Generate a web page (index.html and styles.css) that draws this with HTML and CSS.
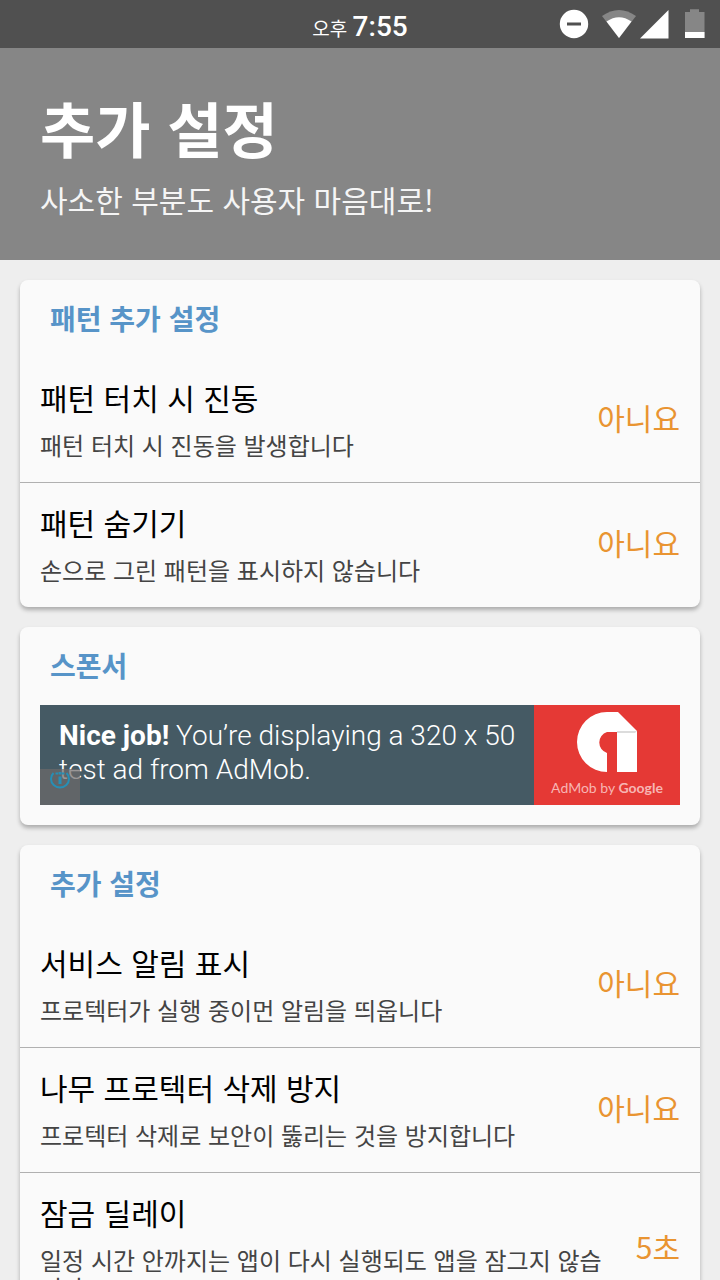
FILE: index.html
```html
<!DOCTYPE html>
<html lang="ko">
<head>
<meta charset="utf-8">
<meta name="viewport" content="width=device-width, initial-scale=1">
<title>추가 설정</title>
<link rel="stylesheet" href="styles.css">
</head>
<body>
<div class="screen">
  <div class="status-bar">
    <div class="clock"><span class="meridiem">오후</span> <span class="time">7:55</span></div>
    <svg class="status-icons" width="148" height="32" viewBox="0 0 148 32" aria-hidden="true">
      <circle cx="16" cy="16" r="14.2" fill="#fff"/>
      <rect x="9" y="14.5" width="14" height="3" fill="#505050"/>
      <path d="M44 8Q61 -4 78 8L61 30Z" fill="#868686"/>
      <path d="M48.5 13.5Q61 5 73.500 13.500L61 30Z" fill="#fff"/>
      <path d="M110.500 2V30.500H82Z" fill="#fff"/>
      <path d="M132 1.200h9V4h5.500v26H127V4h5z" fill="#868686"/>
      <rect x="127" y="24" width="19.500" height="6" fill="#fff"/>
    </svg>
  </div>
  <header class="page-header">
    <h1 class="page-title">추가 설정</h1>
    <p class="page-subtitle">사소한 부분도 사용자 마음대로!</p>
  </header>
  <main class="content">
    <section class="card">
      <h2 class="card-title">패턴 추가 설정</h2>
      <button class="row" type="button">
        <span class="row-text"><span class="row-title">패턴 터치 시 진동</span><span class="row-note">패턴 터치 시 진동을 발생합니다</span></span>
        <span class="row-value">아니요</span>
      </button>
      <button class="row" type="button">
        <span class="row-text"><span class="row-title">패턴 숨기기</span><span class="row-note">손으로 그린 패턴을 표시하지 않습니다</span></span>
        <span class="row-value">아니요</span>
      </button>
    </section>
    <section class="card">
      <h2 class="card-title">스폰서</h2>
      <a class="ad" href="#">
        <span class="ad-text"><strong>Nice job!</strong> You’re displaying a 320 x 50 test ad from AdMob.</span>
        <span class="ad-brand">
          <svg width="60" height="60" viewBox="0 0 60 60" aria-hidden="true">
            <path d="M30 0H41L60 19V60H40V20H30A11 11 0 0 0 30 41V60A30 30 0 0 1 30 0Z" fill="#fff"/>
            <path d="M40 19H60L58 21H40Z" fill="#dcdcdc"/>
          </svg>
          <span class="ad-name">AdMob by <b>Google</b></span>
        </span>
        <span class="ad-info">
          <svg width="22" height="18" viewBox="0 0 22 18" aria-hidden="true">
            <path d="M4.500 1A9 8.500 0 1 0 17.500 1M6.500 1.500H9M13 1.500H15.500" fill="none" stroke="#268fb5" stroke-width="2"/>
            <path d="M11 0V2.500M11 4.500V12" stroke="#268fb5" stroke-width="3"/>
          </svg>
        </span>
      </a>
    </section>
    <section class="card">
      <h2 class="card-title">추가 설정</h2>
      <button class="row" type="button">
        <span class="row-text"><span class="row-title">서비스 알림 표시</span><span class="row-note">프로텍터가 실행 중이먼 알림을 띄웁니다</span></span>
        <span class="row-value">아니요</span>
      </button>
      <button class="row" type="button">
        <span class="row-text"><span class="row-title">나무 프로텍터 삭제 방지</span><span class="row-note">프로텍터 삭제로 보안이 뚫리는 것을 방지합니다</span></span>
        <span class="row-value">아니요</span>
      </button>
      <button class="row" type="button">
        <span class="row-text"><span class="row-title">잠금 딜레이</span><span class="row-note">일정 시간 안까지는 앱이 다시 실행되도 앱을 잠그지 않습니다</span></span>
        <span class="row-value">5초</span>
      </button>
    </section>
  </main>
</div>
</body>
</html>
```
FILE: styles.css
```css
* { box-sizing: border-box; }
body {
  margin: 0;
  background: #eeeeee;
  font-family: "Noto Sans CJK KR", sans-serif;
}
.screen { height: 100vh; overflow: hidden; }
.status-bar {
  display: grid;
  grid-template-columns: 1fr auto 1fr;
  align-items: center;
  height: 48px;
  padding-right: 14px;
  background: #505050;
  color: #fff;
}
.clock {
  grid-column: 2;
  padding: 6px 0 0 14px;
  font-size: 19px;
  line-height: 40px;
}
.time { font: 500 28px/40px Roboto, sans-serif; }
.status-icons { grid-column: 3; justify-self: end; }
.page-header {
  padding: 37px 40px 39px;
  background: #868686;
  color: #fff;
}
.page-title { margin: 0; font-size: 60px; font-weight: 700; line-height: 84px; }
.page-subtitle { margin: 8px 0 0; font-size: 30px; line-height: 44px; color: #f5f5f5; }
.content {
  display: flex;
  flex-direction: column;
  gap: 20px;
  padding: 20px;
}
.card {
  border-radius: 8px;
  background: #fafafa;
  box-shadow: 0 3px 4px rgba(0, 0, 0, 0.28);
}
.card-title {
  margin: 0;
  padding: 19px 30px 21px;
  font-size: 28px;
  font-weight: 700;
  line-height: 38px;
  color: #5794c8;
}
.row {
  display: flex;
  align-items: center;
  gap: 20px;
  width: 100%;
  padding: 17px 20px 23px;
  border: 0;
  background: none;
  font: inherit;
  text-align: left;
  color: #000;
}
.row + .row { border-top: 1px solid #b0b0b0; }
.row-text { display: flex; flex: 1; flex-direction: column; gap: 12px; }
.row-title { font-size: 30px; line-height: 44px; }
.row-note { font-size: 24px; line-height: 28px; color: #444; }
.row-value { font-size: 30px; line-height: 44px; color: #e99431; white-space: nowrap; }
.ad {
  position: relative;
  display: flex;
  height: 100px;
  margin: 0 20px 20px;
  background: #455a64;
  color: #fff;
  text-decoration: none;
}
.ad-text {
  flex: 1;
  padding: 14px 12px 0 19px;
  font: 300 28px/34px Roboto, sans-serif;
}
.ad-text strong { font-weight: 700; }
.ad-brand {
  display: flex;
  flex-direction: column;
  align-items: center;
  width: 146px;
  padding-top: 7px;
  background: #e53935;
}
.ad-name { font: 400 14px/32px Lato, sans-serif; color: #f7b5b3; white-space: nowrap; }
.ad-info {
  position: absolute;
  left: 0;
  bottom: 0;
  display: flex;
  justify-content: center;
  width: 40px;
  height: 36px;
  padding-top: 3px;
  background: rgba(110, 105, 105, 0.7);
}
```
